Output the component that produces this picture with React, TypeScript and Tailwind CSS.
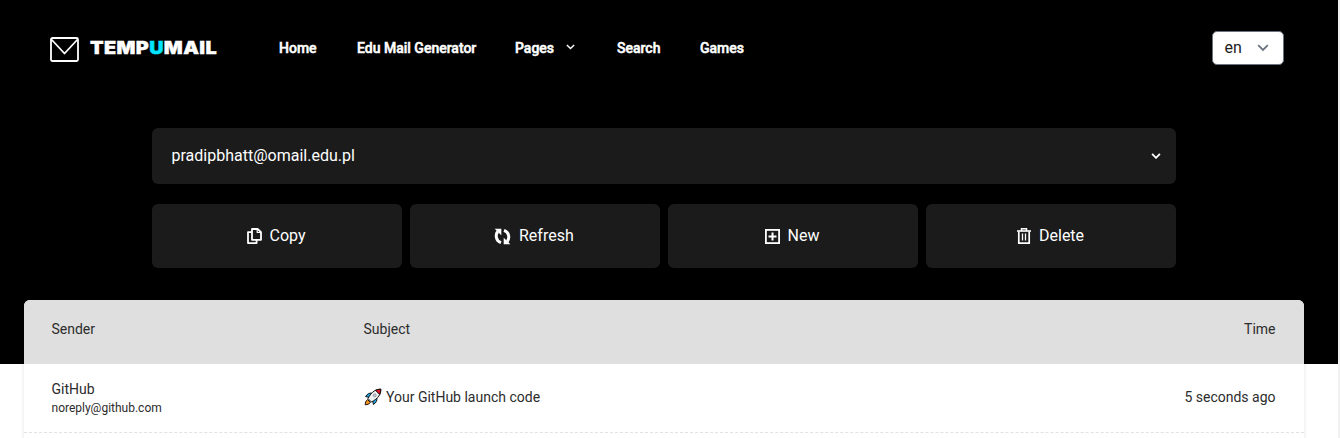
import React from "react";

function Chevron({ className, sw = 2 }: { className: string; sw?: number }) {
  return (
    <svg className={className} viewBox="0 0 12 8" fill="none" stroke="currentColor" strokeWidth={sw} strokeLinejoin="miter">
      <path d="M1.2 1.2 6 6l4.8-4.8" />
    </svg>
  );
}

function CopyIcon() {
  return (
    <svg className="h-4 w-[15px]" viewBox="0 0 15 16" fill="none" stroke="currentColor" strokeWidth="1.8" strokeLinejoin="round">
      <path d="M5 1h5.6L14 4.2v7.6H5z" />
      <path d="M10.2 1v3.5H14" strokeWidth="1.2" />
      <path d="M5 4.1H1v11h8.6v-3.3" />
    </svg>
  );
}

function RefreshIcon() {
  return (
    <svg className="h-[17px] w-[17px]" viewBox="0 0 17 17" fill="none" stroke="currentColor" strokeWidth="3">
      <path d="M3.8 3.5C1.3 6.6 1.5 12.7 7 14.7" />
      <path d="M13.2 13.5c2.5-3.1 2.3-9.2-3.2-11.2" />
      <path d="M.6.8h6.7v6.4z" fill="currentColor" stroke="none" />
      <path d="M16.4 16.2H9.7V9.8z" fill="currentColor" stroke="none" />
    </svg>
  );
}

function NewIcon() {
  return (
    <svg className="h-[15px] w-[15px]" viewBox="0 0 15 15" fill="none" stroke="currentColor" strokeWidth="1.8">
      <rect x=".9" y=".9" width="13.2" height="13.2" />
      <path d="M7.5 3.5v8M3.5 7.5h8" strokeWidth="2" />
    </svg>
  );
}

function TrashIcon() {
  return (
    <svg className="h-4 w-[14px]" viewBox="0 0 14 16" fill="none" stroke="currentColor">
      <path d="M0 3h14" strokeWidth="1.6" />
      <path d="M1.8 3.5v11.6h10.4V3.5" strokeWidth="1.7" />
      <path d="M4.5 3V.8h5V3" strokeWidth="1.5" />
      <path d="M5.5 5.5v7M8.5 5.5v7" strokeWidth="1.3" />
    </svg>
  );
}

function Rocket() {
  return (
    <svg className="h-[18px] w-[18px]" viewBox="0 0 18 18" stroke="#111" strokeWidth="1" strokeLinejoin="round">
      <path d="M8 5.2C5.5 4.6 3 6 1.6 8.6l4 .8zM12.8 10c.6 2.5-.8 5-3.4 6.4l-.8-4z" fill="#1ba7e8" />
      <path d="M3.6 11.6C2 12.5 1.3 14.5 1.2 16.8c2.3-.1 4.3-.8 5.2-2.4z" fill="#f7941d" />
      <path d="M16.8 1.2C12 1.2 7.5 3.5 4 10.6L7.4 14C14.5 10.5 16.8 6 16.8 1.2z" fill="#eef1f4" />
      <path d="M16.8 1.2c-2 0-3.7.3-5.3 1.1l4.2 4.2c.8-1.6 1.1-3.3 1.1-5.3z" fill="#e81224" />
      <circle cx="10.7" cy="7.3" r="1.5" fill="#c4cbd2" stroke="#777" strokeWidth=".6" />
    </svg>
  );
}

const actions = [
  { label: "Copy", icon: <CopyIcon />, pad: "pl-[95px]", gap: "gap-[7.5px]" },
  { label: "Refresh", icon: <RefreshIcon />, pad: "pl-[84px]", gap: "gap-2" },
  { label: "New", icon: <NewIcon />, pad: "pl-[97px]", gap: "gap-[7.5px]" },
  { label: "Delete", icon: <TrashIcon />, pad: "pl-[91px]", gap: "gap-2" },
];

export default function App() {
  return (
    <div className="flex h-[438px] w-[1340px] overflow-hidden bg-[#f1f1f1] font-['Roboto',sans-serif]">
      <main className="h-full w-[1338px] bg-[linear-gradient(#000_364px,#fff_364px)]">
        <header className="flex h-24 items-center pr-[54px] pl-[50px] text-white">
          <svg className="mt-0.5 h-[25px] w-[29px]" viewBox="0 0 29 25" fill="none" stroke="#fff" strokeWidth="1.8" strokeLinejoin="round">
            <rect x="1" y="1" width="27" height="23" rx="1.5" />
            <path d="M1.5 2.5 14.5 16.5 27.5 2.5" />
          </svg>
          <div className="ml-[11px] w-[189px] origin-left scale-x-110 font-['Inter',sans-serif] text-[18px] leading-6 font-black tracking-[0.35px] [-webkit-text-stroke:0.4px]">
            TEMP<span className="text-[#00e5ff]">U</span>MAIL
          </div>
          <nav className="flex grow items-center text-[14px] leading-5 font-medium [-webkit-text-stroke:0.5px]">
            <a className="w-[78px]">Home</a>
            <a className="w-[158px]">Edu Mail Generator</a>
            <a className="flex w-[102px] items-center gap-3">
              Pages
              <Chevron className="mb-[3px] h-[6px] w-[9px]" sw={1.9} />
            </a>
            <a className="w-[83px]">Search</a>
            <a>Games</a>
          </nav>
          <button className="flex h-[34px] w-[72px] items-center justify-between rounded-[5px] border border-[#6b7280] bg-white pr-[14px] pl-[11.5px] text-[16px] text-[#222]">
            en
            <Chevron className="h-2 w-3 text-[#6b7280]" sw={1.8} />
          </button>
        </header>
        <section className="mt-8 ml-[152px] w-[1024px] text-[16px] text-white">
          <div className="flex h-14 items-center justify-between rounded-md bg-[#1b1b1b] pr-[15px] pl-[19.5px]">
            pradipbhatt@omail.edu.pl
            <Chevron className="h-[6.5px] w-[10px]" sw={2.2} />
          </div>
          <div className="mt-5 grid grid-cols-4 gap-2">
            {actions.map((a) => (
              <button key={a.label} className={`flex h-16 items-center rounded-md bg-[#1b1b1b] ${a.pad} ${a.gap}`}>
                {a.icon}
                {a.label}
              </button>
            ))}
          </div>
        </section>
        <section className="mt-8 ml-6 h-[150px] w-[1280px] rounded-t-md bg-white text-[14px] text-[#2c2c2c] shadow-[0_0_4px_rgba(0,0,0,0.12)]">
          <div className="grid h-16 grid-cols-[312px_1fr_200px] items-center rounded-t-md bg-[#dfdfdf] pr-[28.5px] pb-[6px] pl-[27.5px]">
            <span>Sender</span>
            <span>Subject</span>
            <span className="text-right">Time</span>
          </div>
          <div className="grid h-[69px] grid-cols-[312px_1fr_200px] items-center border-b border-dashed border-[#e2e2e2] pr-[28.5px] pl-[27.5px]">
            <div>
              <div className="leading-5">GitHub</div>
              <div className="text-[12px] leading-[18px]">noreply@github.com</div>
            </div>
            <div className="flex items-center gap-[4.5px] pb-[2px]">
              <Rocket />
              Your GitHub launch code
            </div>
            <span className="pb-[2px] text-right">5 seconds ago</span>
          </div>
        </section>
      </main>
    </div>
  );
}
